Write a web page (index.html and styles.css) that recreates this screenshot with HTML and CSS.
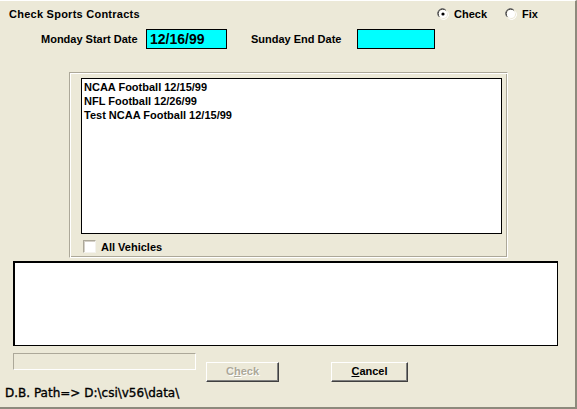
FILE: index.html
```html
<!DOCTYPE html>
<html>
<head>
<meta charset="utf-8">
<link rel="stylesheet" href="styles.css">
</head>
<body>
<div class="window">
  <div class="header">
    <div class="title">Check Sports Contracts</div>
    <div class="radios">
      <span class="radio">
        <svg width="12" height="12" viewBox="0 0 12 12"><path d="M1.5 8.5 A5 5 0 0 1 8.5 1.5" stroke="#808080" fill="none"/><path d="M2.5 8.8 A4 4 0 0 1 8.8 2.5" stroke="#404040" fill="none"/><circle cx="6" cy="6" r="4" fill="#fff"/><path d="M10.5 3.5 A5 5 0 0 1 3.5 10.5" stroke="#fff" fill="none"/><circle cx="6" cy="6" r="1.6" fill="#000"/></svg>
        <span class="rlabel">Check</span>
      </span>
      <span class="radio">
        <svg width="12" height="12" viewBox="0 0 12 12"><path d="M1.5 8.5 A5 5 0 0 1 8.5 1.5" stroke="#808080" fill="none"/><path d="M2.5 8.8 A4 4 0 0 1 8.8 2.5" stroke="#404040" fill="none"/><circle cx="6" cy="6" r="4" fill="#fff"/><path d="M10.5 3.5 A5 5 0 0 1 3.5 10.5" stroke="#fff" fill="none"/></svg>
        <span class="rlabel">Fix</span>
      </span>
    </div>
  </div>
  <div class="dates">
    <span class="lbl lbl-start">Monday Start Date</span>
    <span class="datebox datebox-start">12/16/99</span>
    <span class="lbl lbl-end">Sunday End Date</span>
    <span class="datebox datebox-end"></span>
  </div>
  <div class="group">
    <div class="listbox">
      <div class="item">NCAA Football 12/15/99</div>
      <div class="item">NFL Football 12/26/99</div>
      <div class="item">Test NCAA Football 12/15/99</div>
    </div>
    <div class="checkrow">
      <span class="checkbox"></span>
      <span class="clabel">All Vehicles</span>
    </div>
  </div>
  <div class="memo"></div>
  <div class="bottom">
    <div class="progress"></div>
    <div class="btn btn-check">C<u>h</u>eck</div>
    <div class="btn btn-cancel"><u>C</u>ancel</div>
  </div>
  <div class="path">D.B. Path=&gt; D:\csi\v56\data\</div>
</div>
</body>
</html>
```
FILE: styles.css
```css
html, body {
  margin: 0;
  padding: 0;
  background: #ECE9D8;
}
.window {
  width: 577px;
  height: 409px;
  box-sizing: border-box;
  background: #ECE9D8;
  border-top: 1px solid #ffffff;
  border-right: 2px solid #8d8a7c;
  border-bottom: 2px solid #8d8a7c;
  font-family: "Liberation Sans", Arial, sans-serif;
  font-size: 11px;
  font-weight: bold;
  color: #000;
  display: flex;
  flex-direction: column;
  overflow: hidden;
}
.header {
  height: 26px;
  display: flex;
  align-items: center;
  justify-content: space-between;
  padding-left: 9px;
  padding-right: 38px;
}
.title { letter-spacing: 0.25px; }
.radios {
  display: flex;
  gap: 18px;
  align-items: center;
  margin-right: -1px;
}
.radio {
  display: flex;
  align-items: center;
  gap: 5px;
}
.radio svg { display: block; }
.dates {
  display: flex;
  align-items: center;
  height: 20px;
  margin-top: 2px;
  padding-left: 41px;
}
.lbl-start { width: 105px; }
.lbl-end { width: 106px; }
.datebox {
  box-sizing: border-box;
  height: 20px;
  background: #00FFFF;
  border: 1px solid #000;
  font-size: 14px;
  font-weight: bold;
  line-height: 18px;
  padding-left: 3px;
}
.datebox-start { width: 81px; margin-right: 24px; }
.datebox-end { width: 78px; }
.group {
  box-sizing: border-box;
  margin-top: 23px;
  margin-left: 69px;
  width: 439px;
  height: 186px;
  border-top: 1px solid #ACA899;
  border-left: 1px solid #ACA899;
  border-right: 1px solid #ffffff;
  border-bottom: 1px solid #ffffff;
  box-shadow: inset 1px 1px 0 #ffffff, inset -1px -1px 0 #ACA899;
  padding: 5px 0 0 11px;
}
.listbox {
  box-sizing: border-box;
  width: 421px;
  height: 156px;
  background: #fff;
  border: 1px solid #000;
  padding: 1px 0 0 2px;
}
.item {
  height: 14px;
  line-height: 14px;
}
.checkrow {
  display: flex;
  align-items: center;
  margin-top: 6px;
  margin-left: 2px;
  gap: 5px;
}
.checkbox {
  box-sizing: border-box;
  width: 13px;
  height: 13px;
  background: #fff;
  border-top: 1px solid #ACA899;
  border-left: 1px solid #ACA899;
  border-right: 1px solid #f4f3ee;
  border-bottom: 1px solid #f4f3ee;
  box-shadow: inset 1px 1px 0 #d4d0c8;
}
.memo {
  box-sizing: border-box;
  margin-top: 3px;
  margin-left: 13px;
  width: 545px;
  height: 85px;
  background: #fff;
  border: 1px solid #000;
  box-shadow: inset 1px 1px 0 #000;
}
.bottom {
  display: flex;
  align-items: flex-start;
  margin-top: 7px;
  margin-left: 13px;
  height: 29px;
}
.progress {
  box-sizing: border-box;
  width: 183px;
  height: 17px;
  border-top: 1px solid #ACA899;
  border-left: 1px solid #ACA899;
  border-right: 1px solid #ffffff;
  border-bottom: 1px solid #ffffff;
}
.btn {
  box-sizing: border-box;
  height: 20px;
  margin-top: 9px;
  text-align: center;
  line-height: 17px;
  border-top: 1px solid #ffffff;
  border-left: 1px solid #ffffff;
  border-right: 1px solid #404040;
  border-bottom: 1px solid #404040;
  box-shadow: inset -1px -1px 0 #808080;
  background: #ECE9D8;
}
.btn u { text-decoration: underline; text-underline-offset: 1px; }
.btn-check {
  width: 73px;
  margin-left: 10px;
  color: #ACA899;
  text-shadow: 1px 1px 0 #ffffff;
}
.btn-cancel {
  width: 77px;
  margin-left: 52px;
}
.path {
  margin-left: 5px;
  margin-top: 4px;
  font-family: "DejaVu Sans", sans-serif;
  font-weight: normal;
  font-size: 12px;
  line-height: 14px;
  -webkit-text-stroke: 0.35px #000;
}
```
